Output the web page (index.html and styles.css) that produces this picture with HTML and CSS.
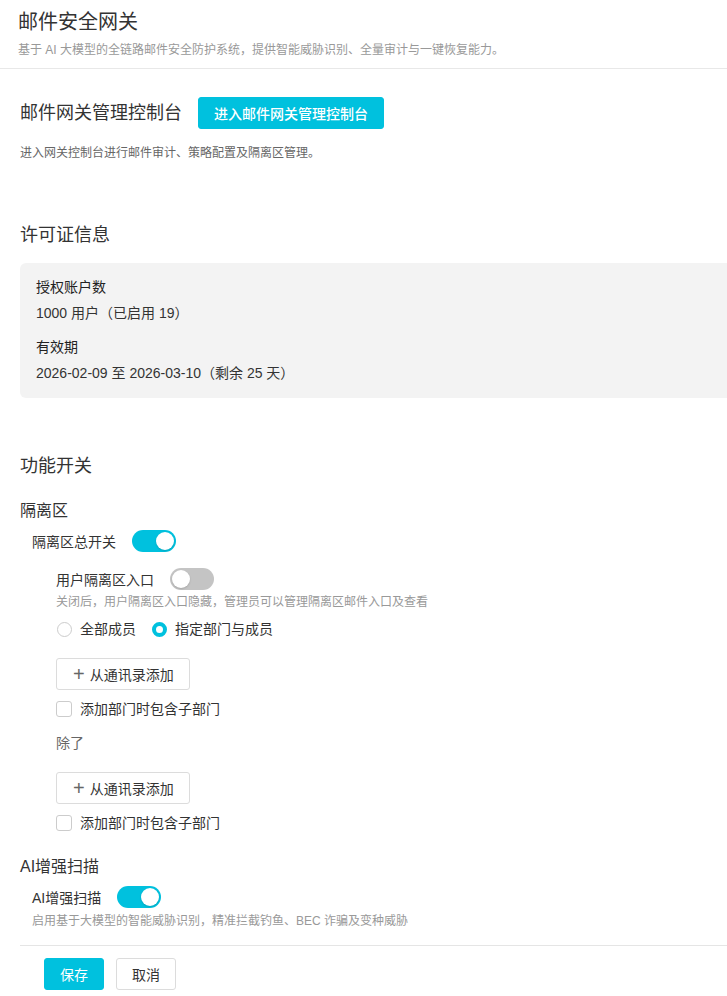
FILE: index.html
```html
<!DOCTYPE html>
<html lang="zh-CN">
  <head>
    <meta charset="UTF-8" />
    <meta name="viewport" content="width=device-width, initial-scale=1.0" />
    <title>邮件安全网关</title>
    <link rel="stylesheet" href="styles.css">
  </head>
  <body>
    <header class="page-header">
      <h1>邮件安全网关</h1>
      <p class="sub">基于 AI 大模型的全链路邮件安全防护系统，提供智能威胁识别、全量审计与一键恢复能力。</p>
    </header>

    <main class="content">
      <section class="console">
        <div class="console-row">
          <h2>邮件网关管理控制台</h2>
          <button class="btn btn-primary btn-wide">进入邮件网关管理控制台</button>
        </div>
        <p class="desc">进入网关控制台进行邮件审计、策略配置及隔离区管理。</p>
      </section>

      <section class="license">
        <h2>许可证信息</h2>
        <div class="info-box">
          <div class="info-label">授权账户数</div>
          <div class="info-value">1000 用户（已启用 19）</div>
          <div class="info-label">有效期</div>
          <div class="info-value">2026-02-09 至 2026-03-10（剩余 25 天）</div>
        </div>
      </section>

      <section class="features">
        <h2>功能开关</h2>

        <h3>隔离区</h3>
        <div class="group">
          <div class="switch-row">
            <span>隔离区总开关</span>
            <span class="switch on"></span>
          </div>

          <div class="sub-group">
            <div class="switch-row">
              <span>用户隔离区入口</span>
              <span class="switch"></span>
            </div>
            <p class="hint">关闭后，用户隔离区入口隐藏，管理员可以管理隔离区邮件入口及查看</p>

            <div class="radios">
              <label class="radio"><span class="dot"></span>全部成员</label>
              <label class="radio checked"><span class="dot"></span>指定部门与成员</label>
            </div>

            <button class="btn btn-add"><span class="plus">+</span>从通讯录添加</button>
            <label class="checkbox"><span class="box"></span>添加部门时包含子部门</label>

            <div class="except">除了</div>

            <button class="btn btn-add"><span class="plus">+</span>从通讯录添加</button>
            <label class="checkbox"><span class="box"></span>添加部门时包含子部门</label>
          </div>
        </div>

        <h3 class="ai-title">AI增强扫描</h3>
        <div class="group">
          <div class="switch-row">
            <span>AI增强扫描</span>
            <span class="switch on"></span>
          </div>
          <p class="hint tight">启用基于大模型的智能威胁识别，精准拦截钓鱼、BEC 诈骗及变种威胁</p>
        </div>
      </section>

      <footer class="actions">
        <button class="btn btn-primary">保存</button>
        <button class="btn btn-default">取消</button>
      </footer>
    </main>
  </body>
</html>
```

FILE: styles.css
```css
html,
body {
  overflow-x: hidden;
}

body {
  margin: 0;
  background: #fff;
  color: #333;
  font-family: "Liberation Sans", "Noto Sans CJK SC", sans-serif;
  font-size: 14px;
}

h1,
h2,
h3,
p {
  margin: 0;
  font-weight: normal;
}

button {
  font-family: inherit;
  cursor: pointer;
}

.page-header {
  padding: 8px 18px 9px;
  border-bottom: 1px solid #e8e8e8;
}

.page-header h1 {
  font-size: 20px;
  line-height: 28px;
  color: #333;
}

.page-header .sub {
  margin-top: 5px;
  font-size: 12px;
  line-height: 18px;
  color: #999;
}

.content {
  padding-left: 20px;
}

.console {
  padding-top: 28px;
}

.console-row {
  display: flex;
  align-items: center;
  gap: 16px;
}

.console-row h2,
.license h2,
.features h2 {
  font-size: 18px;
  line-height: 26px;
  color: #333;
}

.desc {
  margin-top: 15px;
  font-size: 12px;
  line-height: 18px;
  color: #666;
}

.btn {
  height: 32px;
  padding: 0 16px;
  border: 1px solid #dcdcdc;
  border-radius: 3px;
  background: #fff;
  color: #333;
  font-size: 14px;
  white-space: nowrap;
}

.btn-primary {
  border-color: #00c1de;
  background: #00c1de;
  color: #fff;
}

.btn-wide {
  width: 186px;
  padding: 0;
  font-weight: 500;
}

.license {
  margin-top: 60px;
}

.info-box {
  margin-top: 15px;
  padding: 14px 16px 15px;
  border-radius: 6px 0 0 6px;
  background: #f3f3f3;
}

.info-label {
  line-height: 20px;
  color: #222;
}

.info-label + .info-value {
  margin-top: 6px;
}

.info-value {
  line-height: 20px;
}

.info-value + .info-label {
  margin-top: 14px;
}

.features {
  margin-top: 55px;
}

.features h3 {
  margin-top: 20px;
  font-size: 16px;
  line-height: 24px;
  color: #333;
}

.features h3.ai-title {
  margin-top: 22px;
}

.group {
  padding-left: 12px;
  padding-top: 7px;
}

.switch-row {
  display: flex;
  align-items: center;
  gap: 16px;
  height: 22px;
}

.switch {
  position: relative;
  width: 44px;
  height: 22px;
  border-radius: 11px;
  background: #c4c4c4;
}

.switch::after {
  content: "";
  position: absolute;
  top: 2px;
  left: 2px;
  width: 18px;
  height: 18px;
  border-radius: 50%;
  background: #fff;
  box-shadow: 0 1px 2px rgba(0, 0, 0, 0.15);
}

.switch.on {
  background: #00c1de;
}

.switch.on::after {
  left: 24px;
}

.sub-group {
  padding-left: 24px;
  padding-top: 16px;
}

.hint {
  margin-top: 3px;
  font-size: 12px;
  line-height: 18px;
  color: #999;
}

.hint.tight {
  margin-top: 4px;
}

.radios {
  display: flex;
  gap: 15px;
  margin-top: 8px;
  height: 20px;
}

.radio,
.checkbox {
  display: flex;
  align-items: center;
  gap: 8px;
  line-height: 20px;
}

.radio .dot {
  width: 13px;
  height: 13px;
  border: 1px solid #ccc;
  border-radius: 50%;
  margin-left: 1px;
}

.radio.checked .dot {
  width: 7px;
  height: 7px;
  border: 4px solid #00c1de;
}

.btn-add {
  display: flex;
  align-items: center;
  gap: 5px;
  width: 134px;
  margin-top: 19px;
  padding: 0 0 0 16px;
}

.btn-add .plus {
  font-size: 20px;
  line-height: 18px;
  font-weight: 300;
  color: #666;
}

.checkbox {
  margin-top: 9px;
}

.checkbox .box {
  width: 14px;
  height: 14px;
  border: 1px solid #ccc;
  border-radius: 3px;
}

.except {
  margin-top: 14px;
  line-height: 20px;
  color: #666;
}

.actions {
  display: flex;
  gap: 12px;
  margin-top: 15px;
  padding: 12px 0 6px 24px;
  border-top: 1px solid #e5e5e5;
}

.actions .btn {
  width: 60px;
  padding: 0;
}
```
